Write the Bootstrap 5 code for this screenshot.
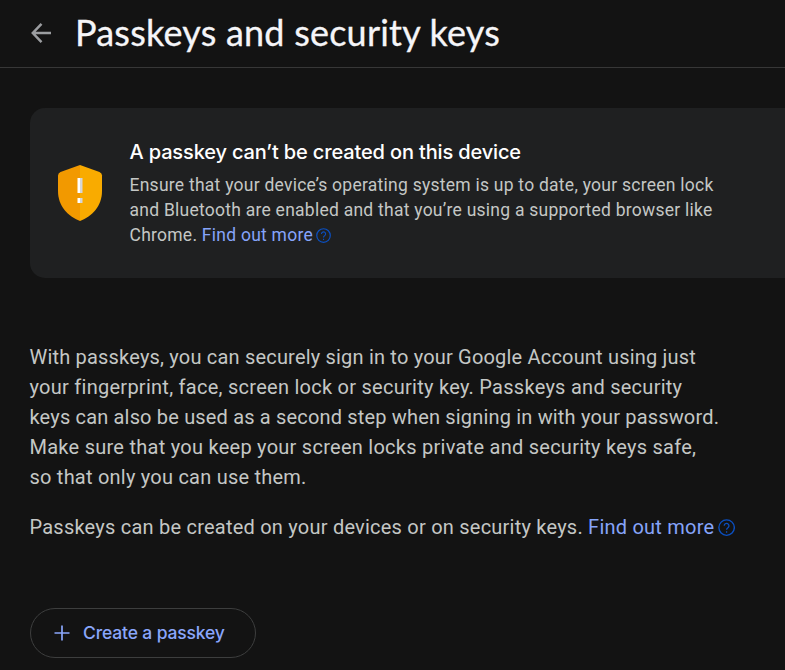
<!DOCTYPE html>
<html lang="en" data-bs-theme="dark">
<head>
<meta charset="utf-8">
<meta name="viewport" content="width=device-width, initial-scale=1">
<title>Passkeys and security keys</title>
<link href="https://cdn.jsdelivr.net/npm/bootstrap@5.3.0/dist/css/bootstrap.min.css" rel="stylesheet">
<style>
  body { background: #131313; color: #c4c7c5; font-family: Roboto, "Liberation Sans", sans-serif; min-height: 670px; }
  .page-header { height: 68px; padding: 0 0 2px 30px; border-bottom: 1px solid #373737; }
  .page-title { font: 400 36px/44px Lato, sans-serif; letter-spacing: .22px; color: #f5f5f8; margin-left: 23px; padding-bottom: 2px; -webkit-text-stroke: .3px #f5f5f8; }
  .page-main { padding-left: 30px; }
  .notice { margin-top: 40px; height: 170px; background: #1f2021; border-radius: 15px 0 0 15px; padding-left: 27px; }
  .notice-text { margin-left: 26.500px; font-size: 17.5px; line-height: 25px; letter-spacing: .25px; }
  .notice-title { font: 500 20px/30px Inter, sans-serif; letter-spacing: -.14px; color: #fff; margin: -2px 0 6px; }
  .intro { margin-top: 64px; font-size: 20px; line-height: 30px; letter-spacing: .225px; }
  .intro .line { margin-left: -.5px; }
  .line { display: block; white-space: nowrap; }
  .fit-a { letter-spacing: .19px; }
  .fit-b { letter-spacing: .265px; }
  .fit-c { letter-spacing: .17px; }
  .fit-d { letter-spacing: .26px; }
  .more { color: #86a4fa; text-decoration: none; }
  .help { width: .86em; height: .86em; vertical-align: -.13em; margin-left: .17em; color: #0b4fc0; }
  .create { width: 226px; height: 50px; margin-top: 66px; border: 1px solid #3d3e3e; color: #8aa6fb; font: 500 17.5px/24px Inter, sans-serif; letter-spacing: -.15px; }
  .create svg { margin: 0 9px 0 23px; }
</style>
<script src="https://cdn.jsdelivr.net/npm/bootstrap@5.3.0/dist/js/bootstrap.bundle.min.js"></script>
</head>
<body class="overflow-hidden">
<svg class="d-none">
  <symbol id="help" viewBox="0 0 16 16">
    <circle cx="8" cy="8" r="7.2" fill="none" stroke="currentColor" stroke-width="1.3"/>
    <path d="M5.8 6.3a2.2 2.2 0 1 1 3.7 1.6C8.6 8.6 8 8.9 8 10M8 11.3v1.4" fill="none" stroke="currentColor" stroke-width="1.2"/>
  </symbol>
</svg>
<header class="page-header d-flex align-items-center">
  <a href="#" class="d-flex" aria-label="Back">
    <svg width="22" height="22" viewBox="0 0 22 22" fill="none" stroke="#9b9da0" stroke-width="2.5"><path d="M21 11H3M11.500 1.900 2.800 11l8.700 9.100"/></svg>
  </a>
  <h1 class="page-title mb-0">Passkeys and security keys</h1>
</header>
<main class="page-main">
  <section class="notice d-flex align-items-center">
    <svg class="flex-shrink-0" width="46" height="56" viewBox="0 0 46 56">
      <path d="M23 0 3.500 7Q1 8 1 10.500V26c0 15 10 25.500 22 30Z" fill="#f29900"/>
      <path d="M23 0l19.500 7Q45 8 45 10.500V26c0 15-10 25.500-22 30Z" fill="#f9ab00"/>
      <path d="M20.500 13H23v15h-2.500zM20.500 33H23v5h-2.500z" fill="#fff"/>
      <path d="M23 13h2.500v15H23zM23 33h2.500v5H23z" fill="#d5d6d8"/>
    </svg>
    <div class="notice-text">
      <h2 class="notice-title">A passkey can’t be created on this device</h2>
      <div>
        <span class="line">Ensure that your device’s operating system is up to date, your screen lock</span>
        <span class="line">and Bluetooth are enabled and that you’re using a supported browser like</span>
        <span class="line">Chrome. <a href="#" class="more">Find out more<svg class="help"><use href="#help"/></svg></a></span>
      </div>
    </div>
  </section>
  <section class="intro">
    <p class="mb-0">
      <span class="line fit-a">With passkeys, you can securely sign in to your Google Account using just</span>
      <span class="line fit-b">your fingerprint, face, screen lock or security key. Passkeys and security</span>
      <span class="line fit-c">keys can also be used as a second step when signing in with your password.</span>
      <span class="line fit-d">Make sure that you keep your screen locks private and security keys safe,</span>
      <span class="line">so that only you can use them.</span>
    </p>
    <p class="mb-0 pt-1 mt-3"><span class="line">Passkeys can be created on your devices or on security keys. <a href="#" class="more">Find out more<svg class="help"><use href="#help"/></svg></a></span></p>
  </section>
  <button type="button" class="create btn rounded-pill d-flex align-items-center p-0">
    <svg width="16" height="16" viewBox="0 0 16 16" stroke="currentColor" stroke-width="1.7"><path d="M8 .5v15M.5 8h15"/></svg>
    <span class="ps-1">Create a passkey</span>
  </button>
</main>
</body>
</html>
